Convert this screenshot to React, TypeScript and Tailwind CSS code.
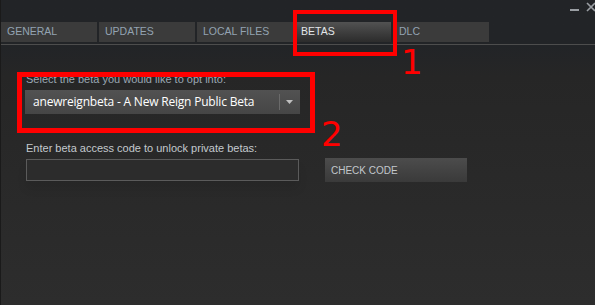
export default function App() {
  const tabs = ["GENERAL", "UPDATES", "LOCAL FILES", "BETAS", "DLC"];
  return (
    <div
      className="relative h-[305px] w-[595px] overflow-hidden bg-gradient-to-b from-[#222427] from-[15%] via-[#262626] via-[25%] to-[#2d2d2d] border-l border-[#1a1a1a]"
      style={{ fontFamily: '"Liberation Sans", Arial, sans-serif' }}
    >
      {/* title strip */}
      <div className="flex h-[22px] items-start justify-end">
        <span className="mt-[9px] mr-[7px] h-[2px] w-[9px] bg-[#9a9ea3]" />
        <svg width="9" height="10" viewBox="0 0 9 10" className="mt-[2px]">
          <path d="M1 1 L9 9 M9 1 L1 9" stroke="#9a9ea3" strokeWidth="1.6" />
        </svg>
      </div>

      {/* tabs */}
      <div className="flex gap-[2px]">
        {tabs.map((t) => (
          <div
            key={t}
            className={
              t === "BETAS"
                ? "flex h-[20px] w-[96px] items-center bg-gradient-to-b from-[#525252] to-[#2c2c2c] pl-[6px] text-[10.5px] text-[#e2e6ea]"
                : "flex h-[20px] w-[96px] items-center bg-[#3b3b3b] pl-[6px] text-[10.5px] text-[#93a3b2]"
            }
          >
            {t}
          </div>
        ))}
      </div>
      <div className="mt-[2px] h-[1px] bg-[#4d4d4d]" />

      {/* content */}
      <div className="pl-[25px] pt-[28px]">
        <div className="text-[11px] leading-[13px] text-[#9aa7b3]">
          Select the beta you would like to opt into:
        </div>
        <div className="ml-[-1px] mt-[4px] flex h-[24px] w-[275px] items-center bg-gradient-to-b from-[#525252] to-[#464646]">
          <span
            className="flex-1 pl-[8px] text-[12px] tracking-[-0.2px] text-white"
            style={{ fontFamily: '"Open Sans", "Noto Sans", sans-serif' }}
          >
            anewreignbeta - A New Reign Public Beta
          </span>
          <span className="h-[16px] w-[1px] bg-[#6a6a6a]" />
          <svg width="19" height="8" viewBox="0 0 19 8" className="mr-[1px]">
            <path d="M6 2 L13 2 L9.5 6 Z" fill="#bfbfbf" />
          </svg>
        </div>

        <div className="mt-[27px] text-[11px] leading-[14px] text-[#c4c9ce]">
          Enter beta access code to unlock private betas:
        </div>
        <div className="mt-[3px] flex items-center gap-[26px]">
          <div className="h-[22px] w-[273px] border border-[#5b5b5b] bg-[#2c2c2c] shadow-[0_8px_10px_rgba(0,0,0,0.08)]" />
          <div className="flex h-[24px] w-[142px] items-center bg-gradient-to-b from-[#4c4c4c] to-[#3a3a3a] pl-[6px] text-[10px] text-[#c3c8cd]">
            CHECK CODE
          </div>
        </div>
      </div>

      {/* annotations */}
      <div className="absolute left-[292px] top-[10px] h-[46px] w-[104px] border-[4px] border-[#ff0000]" />
      <div className="absolute left-[16px] top-[72px] h-[61px] w-[298px] border-[5px] border-[#ff0000]" />
      <span
        className="absolute left-[400px] top-[44px] text-[34px] leading-[36px] text-[#ff0000]"
        style={{ fontFamily: '"DejaVu Sans", sans-serif' }}
      >
        1
      </span>
      <span
        className="absolute left-[320px] top-[116px] text-[34px] leading-[36px] text-[#ff0000]"
        style={{ fontFamily: '"DejaVu Sans", sans-serif' }}
      >
        2
      </span>
    </div>
  );
}
